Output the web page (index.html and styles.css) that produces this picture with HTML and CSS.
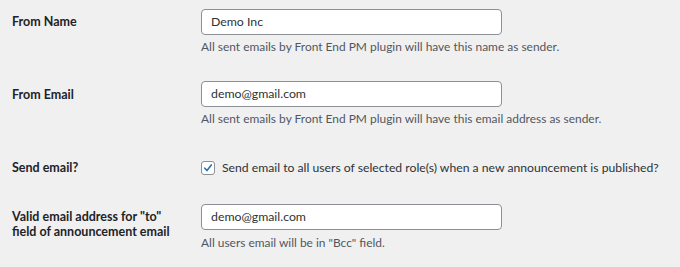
FILE: index.html
```html
<!DOCTYPE html>
<html>
<head>
<meta charset="utf-8">
<link rel="stylesheet" href="styles.css">
</head>
<body>
<div class="form">
  <div class="row r1">
    <div class="label">From Name</div>
    <div class="field">
      <div class="input">Demo Inc</div>
      <p class="desc">All sent emails by Front End PM plugin will have this name as sender.</p>
    </div>
  </div>
  <div class="row r2">
    <div class="label">From Email</div>
    <div class="field">
      <div class="input">demo@gmail.com</div>
      <p class="desc">All sent emails by Front End PM plugin will have this email address as sender.</p>
    </div>
  </div>
  <div class="row r3">
    <div class="label">Send email?</div>
    <div class="field check">
      <span class="box"><svg viewBox="0 0 14 14" width="14" height="14"><path d="M3.2 7.2 L5.8 10 L10.9 3.4" fill="none" stroke="#2271b1" stroke-width="1.8" stroke-linecap="round" stroke-linejoin="round"/></svg></span>
      <span class="ctext">Send email to all users of selected role(s) when a new announcement is published?</span>
    </div>
  </div>
  <div class="row r4">
    <div class="label">Valid email address for "to"<br>field of announcement email</div>
    <div class="field">
      <div class="input">demo@gmail.com</div>
      <p class="desc d4">All users email will be in "Bcc" field.</p>
    </div>
  </div>
</div>
</body>
</html>
```
FILE: styles.css
```css
html, body {
  margin: 0;
  padding: 0;
  background: #f0f0f1;
}
body {
  font-family: Lato, "Noto Sans", sans-serif;
  color: #1d2327;
  width: 680px;
  height: 267px;
  overflow: hidden;
}
.form {
  padding-left: 12px;
}
.row {
  display: flex;
  align-items: flex-start;
}
.label {
  width: 189px;
  flex: none;
  font-weight: 700;
  font-size: 12.5px;
  line-height: 15px;
  color: #1d2327;
}
.field {
  flex: none;
}
.input {
  box-sizing: border-box;
  width: 301px;
  height: 26px;
  border: 1px solid #8c8f94;
  border-radius: 4px;
  background: #fff;
  font-size: 12.3px;
  line-height: 24px;
  padding-left: 9px;
  color: #2c3338;
}
.desc {
  margin: 4px 0 0;
  font-size: 11.95px;
  line-height: 16px;
  color: #50575e;
}
.d4 { margin-top: 5px; }
.r1 { padding-top: 9px; }
.r1 .label { margin-top: 5px; }
.r2 { padding-top: 26px; }
.r2 .label { margin-top: 6px; }
.r3 { padding-top: 33px; }
.r3 .label { margin-top: 0; }
.r4 { padding-top: 28px; }
.r4 .label { margin-top: 5px; }
.check {
  display: flex;
  align-items: center;
  height: 16px;
}
.box {
  box-sizing: border-box;
  width: 14px;
  height: 14px;
  border: 1px solid #8c8f94;
  border-radius: 3px;
  background: #fff;
  display: flex;
  align-items: center;
  justify-content: center;
  margin-right: 7px;
}
.box svg { display: block; }
.ctext {
  font-size: 12.2px;
  line-height: 16px;
  color: #2c3338;
}
```
